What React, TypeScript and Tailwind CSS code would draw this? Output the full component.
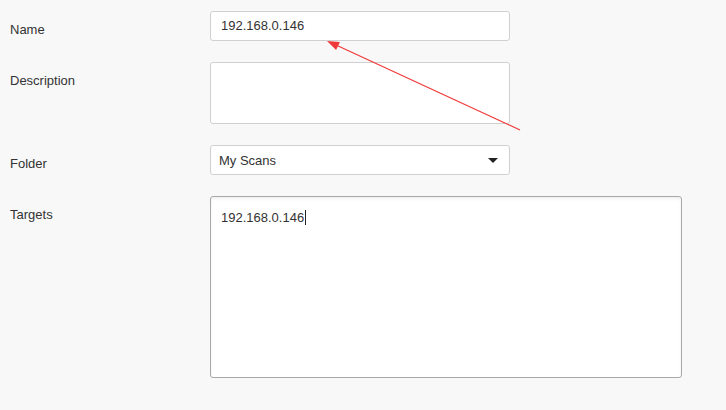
const font = { fontFamily: '"Liberation Sans", Arial, sans-serif' };

function Row({ label, children }: { label: string; children: React.ReactNode }) {
  return (
    <div className="flex items-start">
      <div className="w-[210px] shrink-0 pl-[10px] pt-[10px] text-[13px] leading-[18px] text-[#333]">{label}</div>
      {children}
    </div>
  );
}

export default function App() {
  return (
    <div className="relative h-[410px] w-[726px] overflow-hidden bg-[#f8f8f8]" style={font}>
      <div className="flex flex-col gap-[21px] pt-[11px]">
        <Row label="Name">
          <div className="flex h-[30px] w-[300px] items-center rounded-[3px] border border-[#d0d0d0] bg-white px-[10px] text-[13px] text-[#333]">
            192.168.0.146
          </div>
        </Row>
        <Row label="Description">
          <div className="h-[62px] w-[300px] rounded-[3px] border border-[#d0d0d0] bg-white" />
        </Row>
        <Row label="Folder">
          <div className="flex h-[30px] w-[300px] items-center justify-between rounded-[3px] border border-[#d0d0d0] bg-white pl-[8px] pr-[11px] pt-px text-[13px] text-[#333]">
            <span>My Scans</span>
            <span className="h-0 w-0 border-x-[5px] border-t-[5px] border-x-transparent border-t-[#222]" />
          </div>
        </Row>
        <Row label="Targets">
          <div className="h-[182px] w-[472px] rounded-[3px] border border-[#a8a8a8] bg-white px-[10px] pt-[10px] text-[13px] leading-4 text-[#333] shadow-[inset_0_2px_3px_rgba(0,0,0,0.06)]">
            <span>192.168.0.146</span>
            <span className="ml-px inline-block h-[15px] w-px translate-y-[3px] bg-[#222]" />
          </div>
        </Row>
      </div>
      <svg className="pointer-events-none absolute left-0 top-0" width="726" height="410">
        <line x1="520" y1="130" x2="336" y2="45" stroke="#f03a3a" strokeWidth="1.2" />
        <polygon points="327,41 336.1,50.1 339.9,41.9" fill="#f03a3a" />
      </svg>
    </div>
  );
}
